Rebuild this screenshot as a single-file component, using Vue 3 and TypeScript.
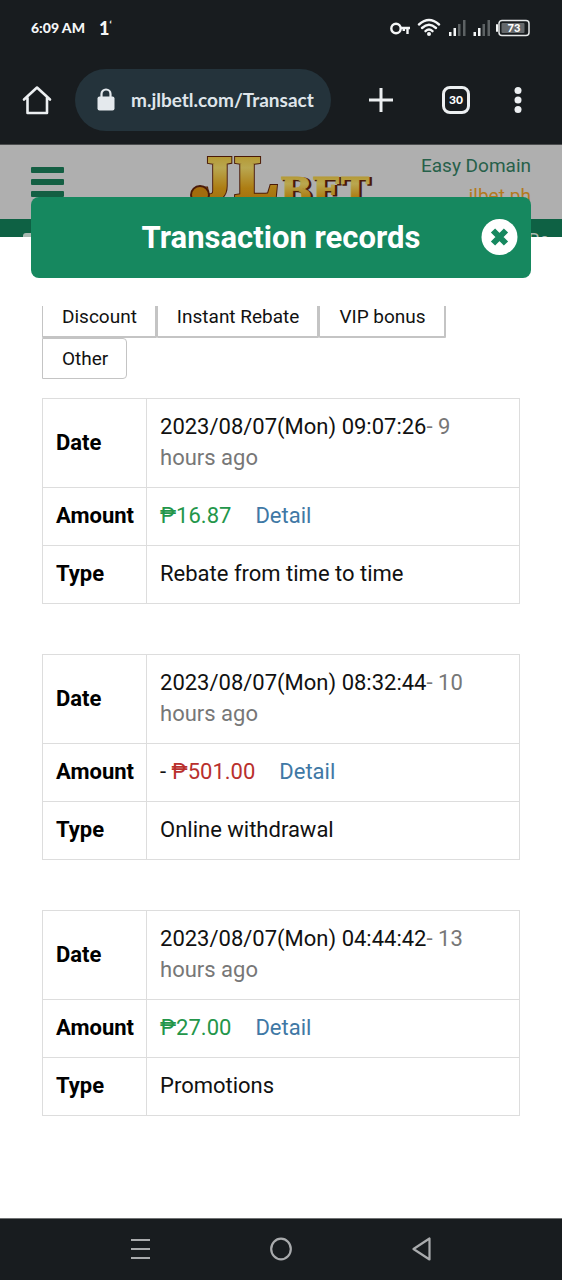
<script setup lang="ts">
interface TransactionRecord {
  date: string
  ago: string
  sign: string
  amount: string
  kind: 'credit' | 'debit'
  type: string
}

const filters: string[] = ['Discount', 'Instant Rebate', 'VIP bonus', 'Other']

const records: TransactionRecord[] = [
  { date: '2023/08/07(Mon) 09:07:26', ago: '- 9 hours ago', sign: '', amount: '₱16.87', kind: 'credit', type: 'Rebate from time to time' },
  { date: '2023/08/07(Mon) 08:32:44', ago: '- 10 hours ago', sign: '- ', amount: '₱501.00', kind: 'debit', type: 'Online withdrawal' },
  { date: '2023/08/07(Mon) 04:44:42', ago: '- 13 hours ago', sign: '', amount: '₱27.00', kind: 'credit', type: 'Promotions' },
]
</script>

<template>
  <div class="screen">
    <header class="chrome">
      <div class="status">
        <span>6:09 AM</span>
        <span class="notice">1<sup>‘</sup></span>
        <svg class="indicators" width="142" height="24" viewBox="0 0 142 24" aria-hidden="true">
          <g fill="none" stroke="#f4f6f7" stroke-width="2.4">
            <circle cx="7" cy="12.5" r="4.7" />
            <path d="M11.7 12H21M18.500 12V18M14.8 12V15" />
            <path d="M30 8.500Q40 -0.500 50 8.500" stroke-linecap="round" />
            <path d="M33 12Q40 5.500 47 12" stroke-linecap="round" />
            <path d="M36.500 15.2Q40 12 43.500 15.2" stroke-linecap="round" />
          </g>
          <circle cx="40" cy="18" r="2" fill="#f4f6f7" />
          <g fill="#f4f6f7">
            <path d="M60 16h2.500v4H60zM64.500 12h2.500v8h-2.500zM84.500 16h2.500v4h-2.500zM89 12h2.500v8H89z" />
            <path d="M69 8h2.500v12H69zM74 4h2.500v16H74zM93.500 8h2.500v12h-2.500zM98.500 4h2.500v16h-2.500z" fill="#5d6264" />
            <rect x="107" y="8" width="2" height="8" rx="1" />
          </g>
          <rect x="110" y="4.500" width="30" height="15" rx="3" fill="none" stroke="#e5e8e9" stroke-width="1.500" />
          <rect x="112.500" y="7" width="23" height="10" rx="1" fill="#64686b" />
          <text x="125" y="16" text-anchor="middle" class="battery">73</text>
        </svg>
      </div>
      <div class="toolbar">
        <button class="tool home" type="button" aria-label="Home">
          <svg width="30" height="30" viewBox="0 0 30 30" fill="none" stroke="#eceff1" stroke-width="2.6" stroke-linejoin="round" stroke-linecap="round">
            <path d="M2 14.500L15 2.500L28 14.500M5.500 13V28H25V13" />
          </svg>
        </button>
        <label class="address">
          <svg width="18" height="24" viewBox="0 0 18 24" aria-hidden="true">
            <rect x="0.500" y="8.500" width="17" height="14" rx="2" fill="#e4e9ed" />
            <path d="M4.500 9V6a4.500 4.500 0 0 1 9 0v3" fill="none" stroke="#e4e9ed" stroke-width="2.2" />
          </svg>
          <input type="text" value="m.jlbetl.com/Transact" aria-label="Address" />
        </label>
        <div class="tools">
          <button class="tool" type="button" aria-label="New tab">
            <svg width="26" height="26" viewBox="0 0 26 26" stroke="#eceff1" stroke-width="3"><path d="M13 1v24M1 13h24" /></svg>
          </button>
          <button class="tool tabs" type="button">30</button>
          <button class="tool" type="button" aria-label="Menu">
            <svg width="8" height="28" viewBox="0 0 8 28" fill="#eceff1"><circle cx="4" cy="4.500" r="3.500" /><circle cx="4" cy="14" r="3.500" /><circle cx="4" cy="23.500" r="3.500" /></svg>
          </button>
        </div>
      </div>
    </header>

    <div class="site">
      <div class="masthead">
        <button class="burger" type="button" aria-label="Site menu"><i /><i /><i /></button>
        <svg class="logo" width="190" height="74" viewBox="0 0 190 74" role="img" aria-label="JL BET">
          <defs>
            <linearGradient id="gold" x1="0" y1="0" x2="0" y2="1">
              <stop offset="0" stop-color="#b08a16" />
              <stop offset="0.35" stop-color="#b9a750" />
              <stop offset="0.65" stop-color="#ad7d13" />
              <stop offset="1" stop-color="#9b650c" />
            </linearGradient>
          </defs>
          <g class="big rim"><text x="15" y="54">J</text><text x="51" y="54">L</text></g>
          <g class="big fill"><text x="15" y="54">J</text><text x="51" y="54">L</text></g>
          <circle cx="15" cy="50" r="9" fill="#a36c0d" stroke="#4a1a08" stroke-width="2" />
          <g class="small rim"><text x="97" y="60">BET</text></g>
          <g class="small fill"><text x="95" y="59">BET</text></g>
        </svg>
        <div class="domains">
          <a href="#domain">Easy Domain</a>
          <a class="alt" href="#jlbet">jlbet.ph</a>
        </div>
      </div>
      <div class="strip"><i /><span>Re</span></div>
    </div>

    <main class="dialog">
      <div class="dialog-head">
        <h1>Transaction records</h1>
        <button class="close" type="button" aria-label="Close">
          <svg width="38" height="38" viewBox="0 0 38 38">
            <circle cx="18.500" cy="18" r="18" fill="#fff" />
            <path d="M12 11.500L25 24.500M25 11.500L12 24.500" stroke="#16885f" stroke-width="6" />
          </svg>
        </button>
      </div>
      <div class="dialog-body">
        <div class="filters">
          <button v-for="f in filters" :key="f" type="button">{{ f }}</button>
        </div>
        <table v-for="r in records" :key="r.date">
          <tbody>
            <tr>
              <th scope="row">Date</th>
              <td>{{ r.date }}<span class="ago">{{ r.ago }}</span></td>
            </tr>
            <tr>
              <th scope="row">Amount</th>
              <td><span v-if="r.sign">{{ r.sign }}</span><span :class="r.kind">{{ r.amount }}</span><a class="detail" href="#detail">Detail</a></td>
            </tr>
            <tr>
              <th scope="row">Type</th>
              <td>{{ r.type }}</td>
            </tr>
          </tbody>
        </table>
      </div>
    </main>

    <nav class="system">
      <button class="tool" type="button" aria-label="Recent apps">
        <svg width="24" height="24" viewBox="0 0 24 24" stroke="#a9abad" stroke-width="2.2"><path d="M3 3h19M3 12h19M3 21h19" /></svg>
      </button>
      <button class="tool" type="button" aria-label="Home screen">
        <svg width="24" height="24" viewBox="0 0 24 24" fill="none" stroke="#a9abad" stroke-width="2.2"><ellipse cx="12" cy="12" rx="9.8" ry="10.3" /></svg>
      </button>
      <button class="tool" type="button" aria-label="Back">
        <svg width="24" height="24" viewBox="0 0 24 24" fill="none" stroke="#a9abad" stroke-width="2.2" stroke-linejoin="round"><path d="M19.500 1.500V22.500L3.500 12Z" /></svg>
      </button>
    </nav>
  </div>
</template>

<style>
body {
  background: #fff;
}
</style>

<style scoped>
.screen {
  display: flex;
  flex-direction: column;
  min-height: 100vh;
  font-family: Roboto, "Liberation Sans", sans-serif;
  color: #111;
}
button {
  font-family: inherit;
  padding: 0;
  border: 0;
  background: none;
  cursor: pointer;
}
svg {
  display: block;
}
a {
  text-decoration: none;
}
.chrome {
  background: #181c1f;
  color: #f4f6f7;
  border-bottom: 1px solid #4b4d4e;
}
.status {
  display: flex;
  align-items: center;
  height: 56px;
  padding: 0 31px;
  font: 900 14px/20px Lato, sans-serif;
}
.notice {
  margin-left: 14px;
  font-size: 18px;
}
.notice sup {
  font-size: 10px;
  line-height: 1px;
}
.indicators {
  margin-left: auto;
}
.battery {
  font: 900 11px Lato, sans-serif;
  fill: #fff;
}
.toolbar {
  display: flex;
  align-items: center;
  height: 88px;
  padding: 0 40px 0 22px;
}
.tool {
  display: flex;
  align-items: center;
  justify-content: center;
}
.home {
  width: 30px;
  margin-right: 23px;
}
.address {
  display: flex;
  align-items: center;
  gap: 16px;
  flex: 1;
  min-width: 0;
  height: 62px;
  padding: 0 8px 0 22px;
  border-radius: 31px;
  background: #24333b;
  box-sizing: border-box;
}
.address svg {
  flex: none;
}
.address input {
  flex: 1;
  min-width: 0;
  padding: 0;
  border: 0;
  outline: 0;
  background: none;
  color: #dfe5ea;
  font: 700 19px/24px Lato, sans-serif;
}
.tools {
  display: flex;
  align-items: center;
  justify-content: space-between;
  width: 154px;
  margin-left: 37px;
}
.tabs {
  width: 28px;
  height: 28px;
  margin-left: 4px;
  border: 3px solid #eceff1;
  border-radius: 8px;
  box-sizing: border-box;
  color: #fff;
  font: 900 12px/16px Lato, sans-serif;
}
.masthead {
  display: flex;
  justify-content: space-between;
  height: 74px;
  padding: 0 31px;
  background: #afafaf;
  overflow: hidden;
}
.burger {
  display: flex;
  flex-direction: column;
  gap: 6px;
  width: 33px;
  height: 30px;
  margin-top: 22px;
}
.burger i {
  width: 100%;
  height: 6px;
  border-radius: 1px;
  background: #145f43;
}
.logo {
  margin: 0 0 0 75px;
}
.big {
  font: bold 62px "Liberation Serif", serif;
}
.small {
  font: bold 38px "DejaVu Serif", serif;
}
.fill {
  fill: url(#gold);
  stroke: url(#gold);
  stroke-width: 1;
}
.big.fill {
  stroke-width: 4;
}
.rim {
  fill: #4a1a08;
  stroke: #4a1a08;
  stroke-width: 2;
}
.big.rim {
  stroke-width: 6;
}
.domains {
  display: flex;
  flex-direction: column;
  text-align: right;
  padding-top: 6px;
  font-size: 19px;
  line-height: 30px;
}
.domains a {
  color: #27604a;
  white-space: nowrap;
}
.domains .alt {
  color: #b47a20;
}
.strip {
  display: flex;
  justify-content: space-between;
  align-items: flex-start;
  height: 18px;
  padding: 0 13px 0 23px;
  background: #0e6144;
  overflow: hidden;
}
.strip i {
  width: 12px;
  height: 5px;
  margin-top: 14px;
  border-radius: 3px 0 0 0;
  background: #a9b8b1;
}
.strip span {
  margin-top: 11px;
  color: #a9b8b1;
  font-size: 18px;
  line-height: 20px;
}
.dialog {
  position: relative;
  flex: 1;
  margin: -40px 31px 0;
}
.dialog-head {
  display: grid;
  grid-template-columns: 38px 1fr 38px;
  align-items: center;
  height: 81px;
  padding: 0 12px;
  border-radius: 8px;
  background: #16885f;
}
h1 {
  grid-column: 2;
  margin: 0;
  color: #fff;
  font-size: 31px;
  line-height: 40px;
  font-weight: 700;
  text-align: center;
  white-space: nowrap;
}
.dialog-body {
  margin-top: 28px;
  padding: 0 11px;
  overflow: hidden;
}
.filters {
  display: flex;
  flex-wrap: wrap;
  margin: -9px 0 19px;
}
.filters button {
  height: 41px;
  padding: 0 18px 0 19px;
  border: 1px solid #c4c4c4;
  border-width: 1px 2px 2px 1px;
  border-radius: 1px;
  color: #111;
  font-size: 19px;
  line-height: 22px;
}
.filters button:last-child {
  border-width: 1px;
  border-radius: 0 4px 4px 0;
}
table {
  width: 100%;
  margin-bottom: 50px;
  border-collapse: collapse;
  font-size: 22px;
  line-height: 31px;
}
th,
td {
  padding: 12px 13px 14px;
  border: 1px solid #ddd;
  text-align: left;
  vertical-align: middle;
}
th {
  width: 77px;
  padding-right: 12px;
  color: #000;
  font-weight: 700;
}
.ago {
  color: #777;
}
.credit {
  color: #23964a;
}
.debit {
  color: #b9302d;
}
span {
  white-space: pre-wrap;
}
.detail {
  margin-left: 24px;
  color: #4078a5;
}
.system {
  display: flex;
  justify-content: space-between;
  align-items: center;
  height: 59px;
  padding: 0 128px 2px;
  border-top: 1px solid #707273;
  background: #181c1f;
}
</style>
